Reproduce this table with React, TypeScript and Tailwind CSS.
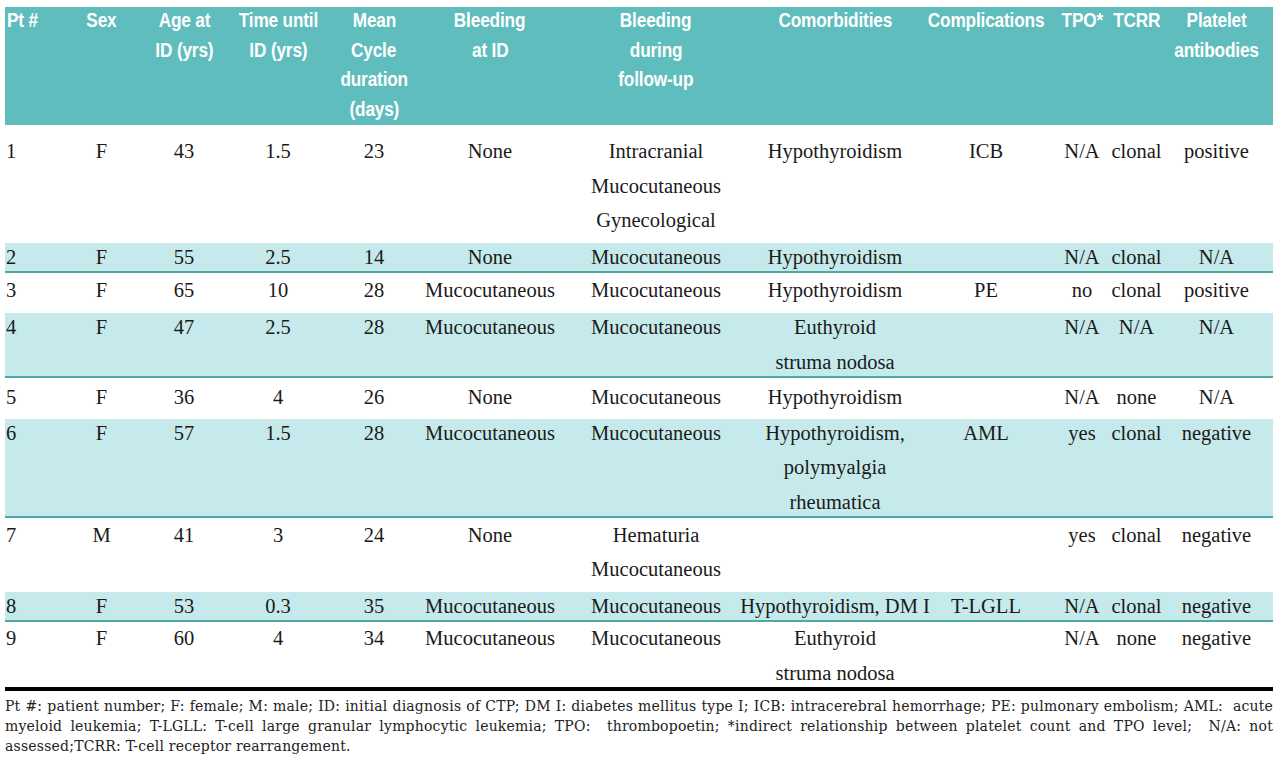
import React from "react";

type Row = {
  cells: (string | string[])[];
  band: boolean;
  pad: string;
};

const cols =
  "grid grid-cols-[55px_83px_82px_106px_86px_146px_186px_172px_130px_62px_47px_113px]";

const headers: string[][] = [
  ["Pt #"],
  ["Sex"],
  ["Age at", "ID (yrs)"],
  ["Time until", "ID (yrs)"],
  ["Mean", "Cycle", "duration", "(days)"],
  ["Bleeding", "at ID"],
  ["Bleeding", "during", "follow-up"],
  ["Comorbidities"],
  ["Complications"],
  ["TPO*"],
  ["TCRR"],
  ["Platelet", "antibodies"],
];

const rows: Row[] = [
  {
    cells: ["1", "F", "43", "1.5", "23", "None", ["Intracranial", "Mucocutaneous", "Gynecological"], "Hypothyroidism", "ICB", "N/A", "clonal", "positive"],
    band: false,
    pad: "pt-[12px] pb-[9px]",
  },
  {
    cells: ["2", "F", "55", "2.5", "14", "None", "Mucocutaneous", "Hypothyroidism", "", "N/A", "clonal", "N/A"],
    band: true,
    pad: "",
  },
  {
    cells: ["3", "F", "65", "10", "28", "Mucocutaneous", "Mucocutaneous", "Hypothyroidism", "PE", "no", "clonal", "positive"],
    band: false,
    pad: "pt-[3px] pb-[9px]",
  },
  {
    cells: ["4", "F", "47", "2.5", "28", "Mucocutaneous", "Mucocutaneous", ["Euthyroid", "struma nodosa"], "", "N/A", "N/A", "N/A"],
    band: true,
    pad: "",
  },
  {
    cells: ["5", "F", "36", "4", "26", "None", "Mucocutaneous", "Hypothyroidism", "", "N/A", "none", "N/A"],
    band: false,
    pad: "pt-[5px] pb-[8px]",
  },
  {
    cells: ["6", "F", "57", "1.5", "28", "Mucocutaneous", "Mucocutaneous", ["Hypothyroidism,", "polymyalgia", "rheumatica"], "AML", "yes", "clonal", "negative"],
    band: true,
    pad: "",
  },
  {
    cells: ["7", "M", "41", "3", "24", "None", ["Hematuria", "Mucocutaneous"], "", "", "yes", "clonal", "negative"],
    band: false,
    pad: "pt-[3px] pb-[9px]",
  },
  {
    cells: ["8", "F", "53", "0.3", "35", "Mucocutaneous", "Mucocutaneous", "Hypothyroidism, DM I", "T-LGLL", "N/A", "clonal", "negative"],
    band: true,
    pad: "",
  },
  {
    cells: ["9", "F", "60", "4", "34", "Mucocutaneous", "Mucocutaneous", ["Euthyroid", "struma nodosa"], "", "N/A", "none", "negative"],
    band: false,
    pad: "pt-[2px]",
  },
];

const Cell = ({ lines, first }: { lines: string[]; first: boolean }) => (
  <div className={`flex flex-col gap-[6.5px] ${first ? "items-start pl-[1px]" : "items-center"}`}>
    {lines.map((l, i) => (
      <span key={i} className="whitespace-nowrap leading-[28px]">
        {l}
      </span>
    ))}
  </div>
);

export default function App() {
  return (
    <div className="min-h-screen bg-white pt-[7px]">
      <div className="ml-[5px] w-[1268px]">
        {/* header */}
        <div
          className={`${cols} h-[118px] bg-[#5fbdbd] text-white font-bold text-[21px] leading-[29.5px]`}
          style={{ fontFamily: '"Liberation Sans", Arial, sans-serif' }}
        >
          {headers.map((h, i) => (
            <div
              key={i}
              className={`-mt-[2px] flex flex-col ${i === 0 ? "items-start pl-[2px]" : "items-center"}`}
            >
              {h.map((l, j) => (
                <span
                  key={j}
                  className={`inline-block whitespace-nowrap scale-x-[0.82] tracking-[-0.2px] ${i === 0 ? "origin-left" : "origin-center"}`}
                >
                  {l}
                </span>
              ))}
            </div>
          ))}
        </div>

        {/* body */}
        <div className="text-[20.5px] text-[#1a1a1a]" style={{ fontFamily: '"Liberation Serif", serif' }}>
          {rows.map((r, i) => (
            <div
              key={i}
              className={`${cols} ${r.pad} ${r.band ? "bg-[#c6eaeb] border-b-2 border-[#4ea9a7]" : ""}`}
            >
              {r.cells.map((c, j) => (
                <Cell key={j} lines={Array.isArray(c) ? c : c ? [c] : []} first={j === 0} />
              ))}
            </div>
          ))}
        </div>

        <div className="h-[4px] bg-black" />

        {/* footnote */}
        <div
          className="pt-[5px] text-[14px] leading-[20px] tracking-[0.2px] text-[#222]"
          style={{ fontFamily: '"DejaVu Serif", serif' }}
        >
          <p className="text-justify [text-align-last:justify] whitespace-nowrap">
            Pt #: patient number; F: female; M: male; ID: initial diagnosis of CTP; DM I: diabetes mellitus type I; ICB: intracerebral hemorrhage; PE: pulmonary embolism; AML:&nbsp; acute
          </p>
          <p className="text-justify [text-align-last:justify] whitespace-nowrap">
            myeloid leukemia; T-LGLL: T-cell large granular lymphocytic leukemia; TPO:&nbsp; thrombopoetin; *indirect relationship between platelet count and TPO level;&nbsp; N/A: not
          </p>
          <p>assessed;TCRR: T-cell receptor rearrangement.</p>
        </div>
      </div>
    </div>
  );
}
